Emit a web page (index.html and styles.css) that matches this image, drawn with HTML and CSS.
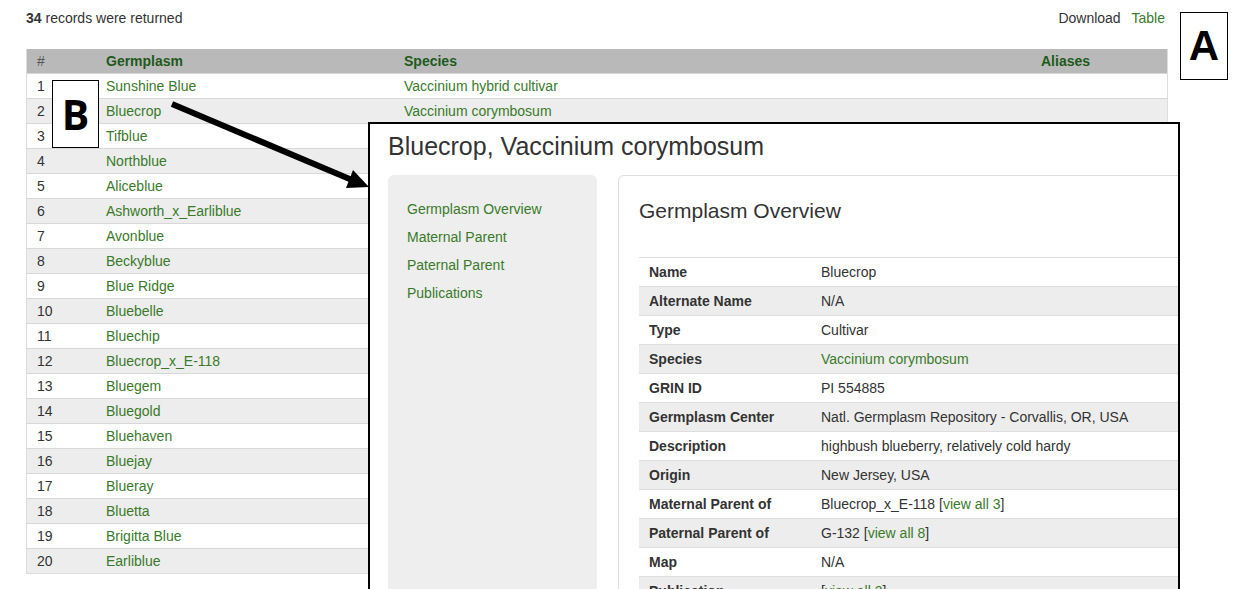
FILE: index.html
```html
<!DOCTYPE html>
<html>
<head>
<meta charset="utf-8">
<link rel="stylesheet" href="styles.css">
</head>
<body>
<div class="page">
  <div class="topbar">
    <div class="count"><b>34</b> records were returned</div>
    <div class="dl">Download <a class="lnk">Table</a></div>
  </div>
  <table class="results">
    <thead>
      <tr><th class="c1">#</th><th class="c2">Germplasm</th><th class="c3">Species</th><th class="c4">Aliases</th></tr>
    </thead>
    <tbody>
      <tr><td>1</td><td class="lnk">Sunshine Blue</td><td class="lnk">Vaccinium hybrid cultivar</td><td></td></tr>
      <tr><td>2</td><td class="lnk">Bluecrop</td><td class="lnk">Vaccinium corymbosum</td><td></td></tr>
      <tr><td>3</td><td class="lnk">Tifblue</td><td></td><td></td></tr>
      <tr><td>4</td><td class="lnk">Northblue</td><td></td><td></td></tr>
      <tr><td>5</td><td class="lnk">Aliceblue</td><td></td><td></td></tr>
      <tr><td>6</td><td class="lnk">Ashworth_x_Earliblue</td><td></td><td></td></tr>
      <tr><td>7</td><td class="lnk">Avonblue</td><td></td><td></td></tr>
      <tr><td>8</td><td class="lnk">Beckyblue</td><td></td><td></td></tr>
      <tr><td>9</td><td class="lnk">Blue Ridge</td><td></td><td></td></tr>
      <tr><td>10</td><td class="lnk">Bluebelle</td><td></td><td></td></tr>
      <tr><td>11</td><td class="lnk">Bluechip</td><td></td><td></td></tr>
      <tr><td>12</td><td class="lnk">Bluecrop_x_E-118</td><td></td><td></td></tr>
      <tr><td>13</td><td class="lnk">Bluegem</td><td></td><td></td></tr>
      <tr><td>14</td><td class="lnk">Bluegold</td><td></td><td></td></tr>
      <tr><td>15</td><td class="lnk">Bluehaven</td><td></td><td></td></tr>
      <tr><td>16</td><td class="lnk">Bluejay</td><td></td><td></td></tr>
      <tr><td>17</td><td class="lnk">Blueray</td><td></td><td></td></tr>
      <tr><td>18</td><td class="lnk">Bluetta</td><td></td><td></td></tr>
      <tr><td>19</td><td class="lnk">Brigitta Blue</td><td></td><td></td></tr>
      <tr><td>20</td><td class="lnk">Earliblue</td><td></td><td></td></tr>
    </tbody>
  </table>
</div>

<div class="label label-a">A</div>
<div class="label label-b">B</div>

<svg class="arrow" width="1248" height="589" viewBox="0 0 1248 589">
  <line x1="172" y1="104" x2="352" y2="180" stroke="#000" stroke-width="6"/>
  <polygon points="369,187 346,188 353,170" fill="#000"/>
</svg>

<div class="inset">
  <h1 class="inset-title">Bluecrop, Vaccinium corymbosum</h1>
  <div class="inset-body">
    <nav class="sidebar">
      <a class="lnk">Germplasm Overview</a>
      <a class="lnk">Maternal Parent</a>
      <a class="lnk">Paternal Parent</a>
      <a class="lnk">Publications</a>
    </nav>
    <section class="pane">
      <h2 class="pane-title">Germplasm Overview</h2>
      <table class="details">
        <colgroup><col class="k"><col class="v"></colgroup>
        <tr><th>Name</th><td>Bluecrop</td></tr>
        <tr><th>Alternate Name</th><td>N/A</td></tr>
        <tr><th>Type</th><td>Cultivar</td></tr>
        <tr><th>Species</th><td class="lnk">Vaccinium corymbosum</td></tr>
        <tr><th>GRIN ID</th><td>PI 554885</td></tr>
        <tr><th>Germplasm Center</th><td>Natl. Germplasm Repository - Corvallis, OR, USA</td></tr>
        <tr><th>Description</th><td>highbush blueberry, relatively cold hardy</td></tr>
        <tr><th>Origin</th><td>New Jersey, USA</td></tr>
        <tr><th>Maternal Parent of</th><td>Bluecrop_x_E-118 [<span class="lnk">view all 3</span>]</td></tr>
        <tr><th>Paternal Parent of</th><td>G-132 [<span class="lnk">view all 8</span>]</td></tr>
        <tr><th>Map</th><td>N/A</td></tr>
        <tr><th>Publication</th><td>[<span class="lnk">view all 2</span>]</td></tr>
      </table>
    </section>
  </div>
</div>
</body>
</html>
```

FILE: styles.css
```css
html, body {
  margin: 0;
  padding: 0;
  background: #fff;
  overflow: hidden;
  height: 589px;
}
body {
  font-family: Arial, "Liberation Sans", sans-serif;
  font-size: 14px;
  color: #333;
  position: relative;
}
.lnk {
  color: #3a7a2a;
  text-decoration: none;
}
.page {
  padding: 0 82px 0 26px;
}
.topbar {
  display: flex;
  justify-content: space-between;
  align-items: center;
  height: 36px;
  margin-bottom: 13px;
}
.topbar .dl {
  margin-right: 1px;
}
.topbar .dl .lnk {
  margin-left: 7px;
}
.results {
  width: 1140px;
  border-collapse: collapse;
  table-layout: fixed;
  border-left: 1px solid #ddd;
  border-right: 1px solid #ddd;
  border-bottom: 1px solid #ddd;
}
.results th {
  background: #b9b9b9;
  color: #1f5a1b;
  font-weight: bold;
  text-align: left;
  height: 24px;
  padding: 0 0 0 10px;
  line-height: 16px;
}
.results th.c1 { width: 59px; color: #555; font-weight: normal; }
.results th.c2 { width: 288px; }
.results th.c3 { width: 627px; }
.results th.c4 { width: 126px; }
.results td {
  height: 24px;
  padding: 0 0 0 10px;
  line-height: 16px;
  border-top: 1px solid #d8d8d8;
  white-space: nowrap;
}
.results tbody tr:nth-child(even) td {
  background: #ededed;
}
.label {
  position: absolute;
  background: #fff;
  border: 1px solid #000;
  color: #000;
  font-weight: bold;
  display: flex;
  align-items: center;
  justify-content: center;
}
.label-a {
  left: 1180px;
  top: 12px;
  width: 46px;
  height: 66px;
  font-family: Arial, "Liberation Sans", sans-serif;
  font-size: 42px;
}
.label-b {
  left: 52px;
  top: 80px;
  width: 45px;
  height: 66px;
  font-family: "Open Sans", Arial, sans-serif;
  font-size: 41px;
}
.arrow {
  position: absolute;
  left: 0;
  top: 0;
  pointer-events: none;
}
.inset {
  position: absolute;
  left: 368px;
  top: 122px;
  width: 790px;
  height: 500px;
  border: 2px solid #000;
  background: #fff;
  overflow: hidden;
  padding: 0 0 0 18px;
}
.inset-title {
  margin: 8px 0 0 0;
  font-size: 25px;
  font-weight: normal;
  line-height: 28px;
  color: #333;
}
.inset-body {
  display: flex;
  gap: 21px;
  margin-top: 15px;
  align-items: flex-start;
}
.sidebar {
  flex: none;
  width: 190px;
  height: 460px;
  background: #eee;
  border-radius: 6px;
  padding: 20px 0 0 19px;
  display: flex;
  flex-direction: column;
}
.sidebar a {
  line-height: 28px;
}
.pane {
  flex: none;
  width: 700px;
  border: 1px solid #ddd;
  border-radius: 6px;
  padding: 23px 0 0 20px;
  height: 460px;
}
.pane-title {
  margin: 0;
  font-size: 21px;
  font-weight: normal;
  line-height: 24px;
  color: #333;
}
.details {
  margin-top: 34px;
  width: 680px;
  border-collapse: collapse;
  table-layout: fixed;
  border-top: 1px solid #ddd;
}
.details col.k { width: 172px; }
.details col.v { width: 508px; }
.details th, .details td {
  text-align: left;
  padding: 6px 10px;
  line-height: 16px;
  border-bottom: 1px solid #ddd;
  white-space: nowrap;
}
.details th {
  font-weight: bold;
  color: #333;
}
.details tr:nth-child(even) th,
.details tr:nth-child(even) td {
  background: #ededed;
}
```
